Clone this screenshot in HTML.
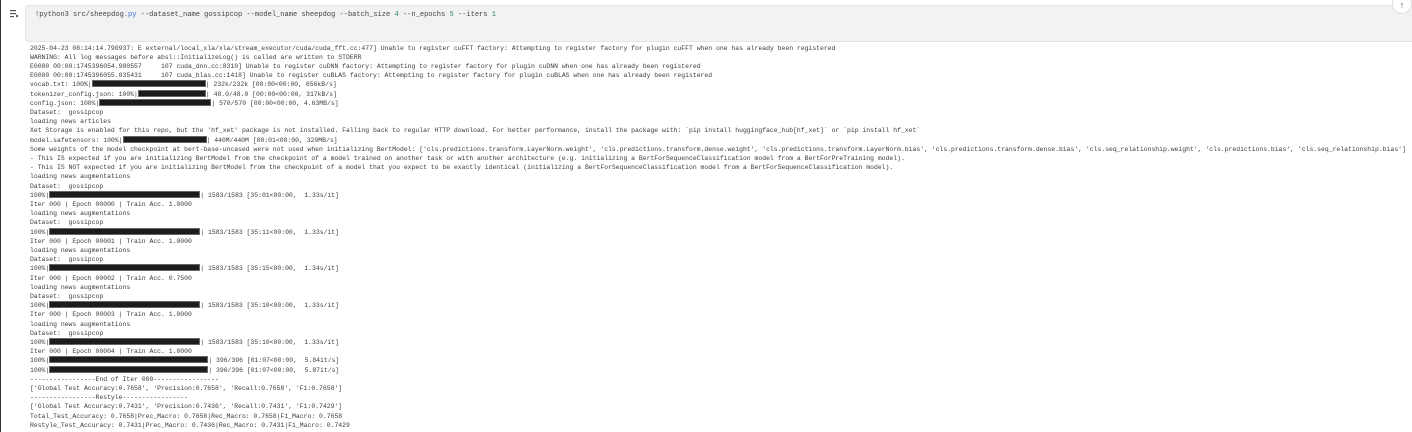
<!DOCTYPE html>
<html><head><meta charset="utf-8"><style>
body{margin:0;width:1412px;height:432px;background:#fff;position:relative;overflow:hidden;font-family:"Liberation Mono",monospace}
.lb{position:absolute;left:0;top:0;width:1px;height:432px;background:#333}
.run{position:absolute;left:10px;top:9px;width:9px;height:9px}
.cell{position:absolute;left:25px;top:5px;width:1390px;height:37px;background:#f2f2f4;border:1px solid #e4e4e6;border-radius:3px;box-sizing:border-box}
.cmd{position:absolute;left:35px;top:11px;font-size:7.05px;color:#444;white-space:pre}
.g{color:#2e8b57}.b{color:#3a6fd8}
.up{position:absolute;left:1392px;top:-6px;width:18px;height:18px;border-radius:50%;background:#fff;border:1px solid #ddd;text-align:center;font-size:9px;line-height:22px;color:#555}
pre{position:absolute;left:30px;top:43.5px;margin:0;font-family:"Liberation Mono",monospace;font-size:6.43px;line-height:9.2px;color:#3c3c3c}
.bar{display:inline-block;height:7px;vertical-align:-1px;background:#1c1c1c;border:1px solid #666;box-sizing:border-box}
</style></head><body>
<div class="lb"></div>
<svg class="run" viewBox="0 0 9 9"><rect x="0" y="1" width="6" height="1.2" fill="#555"/><rect x="0" y="4" width="6" height="1.2" fill="#555"/><rect x="0" y="7" width="4" height="1.2" fill="#555"/><path d="M6 5.5 L9 7 L6 8.5Z" fill="#555"/></svg>
<div class="cell"></div>
<div class="cmd">!python3 src/sheepdog<span class="b">.py</span> --dataset_name gossipcop --model_name sheepdog --batch_size <span class="g">4</span> --n_epochs <span class="g">5</span> --iters <span class="g">1</span></div>
<div class="up">↑</div>
<pre>2025-04-23 08:14:14.790937: E external/local_xla/xla/stream_executor/cuda/cuda_fft.cc:477] Unable to register cuFFT factory: Attempting to register factory for plugin cuFFT when one has already been registered
WARNING: All log messages before absl::InitializeLog() is called are written to STDERR
E0000 00:00:1745396054.980557     107 cuda_dnn.cc:8310] Unable to register cuDNN factory: Attempting to register factory for plugin cuDNN when one has already been registered
E0000 00:00:1745396055.035431     107 cuda_blas.cc:1418] Unable to register cuBLAS factory: Attempting to register factory for plugin cuBLAS when one has already been registered
vocab.txt: 100%|<span class="bar" style="width:114px"></span>| 232k/232k [00:00&lt;00:00, 656kB/s]
tokenizer_config.json: 100%|<span class="bar" style="width:68px"></span>| 48.0/48.0 [00:00&lt;00:00, 317kB/s]
config.json: 100%|<span class="bar" style="width:112px"></span>| 570/570 [00:00&lt;00:00, 4.63MB/s]
Dataset:  gossipcop
loading news articles
Xet Storage is enabled for this repo, but the 'hf_xet' package is not installed. Falling back to regular HTTP download. For better performance, install the package with: `pip install huggingface_hub[hf_xet]` or `pip install hf_xet`
model.safetensors: 100%|<span class="bar" style="width:84px"></span>| 440M/440M [00:01&lt;00:00, 320MB/s]
Some weights of the model checkpoint at bert-base-uncased were not used when initializing BertModel: ['cls.predictions.transform.LayerNorm.weight', 'cls.predictions.transform.dense.weight', 'cls.predictions.transform.LayerNorm.bias', 'cls.predictions.transform.dense.bias', 'cls.seq_relationship.weight', 'cls.predictions.bias', 'cls.seq_relationship.bias']
- This IS expected if you are initializing BertModel from the checkpoint of a model trained on another task or with another architecture (e.g. initializing a BertForSequenceClassification model from a BertForPreTraining model).
- This IS NOT expected if you are initializing BertModel from the checkpoint of a model that you expect to be exactly identical (initializing a BertForSequenceClassification model from a BertForSequenceClassification model).
loading news augmentations
Dataset:  gossipcop
100%|<span class="bar" style="width:151px"></span>| 1583/1583 [35:01&lt;00:00,  1.33s/it]
Iter 000 | Epoch 00000 | Train Acc. 1.0000
loading news augmentations
Dataset:  gossipcop
100%|<span class="bar" style="width:151px"></span>| 1583/1583 [35:11&lt;00:00,  1.33s/it]
Iter 000 | Epoch 00001 | Train Acc. 1.0000
loading news augmentations
Dataset:  gossipcop
100%|<span class="bar" style="width:151px"></span>| 1583/1583 [35:15&lt;00:00,  1.34s/it]
Iter 000 | Epoch 00002 | Train Acc. 0.7500
loading news augmentations
Dataset:  gossipcop
100%|<span class="bar" style="width:151px"></span>| 1583/1583 [35:10&lt;00:00,  1.33s/it]
Iter 000 | Epoch 00003 | Train Acc. 1.0000
loading news augmentations
Dataset:  gossipcop
100%|<span class="bar" style="width:151px"></span>| 1583/1583 [35:10&lt;00:00,  1.33s/it]
Iter 000 | Epoch 00004 | Train Acc. 1.0000
100%|<span class="bar" style="width:159px"></span>| 396/396 [01:07&lt;00:00,  5.84it/s]
100%|<span class="bar" style="width:159px"></span>| 396/396 [01:07&lt;00:00,  5.87it/s]
-----------------End of Iter 000-----------------
['Global Test Accuracy:0.7658', 'Precision:0.7658', 'Recall:0.7658', 'F1:0.7658']
-----------------Restyle-----------------
['Global Test Accuracy:0.7431', 'Precision:0.7436', 'Recall:0.7431', 'F1:0.7429']
Total_Test_Accuracy: 0.7658|Prec_Macro: 0.7658|Rec_Macro: 0.7658|F1_Macro: 0.7658
Restyle_Test_Accuracy: 0.7431|Prec_Macro: 0.7436|Rec_Macro: 0.7431|F1_Macro: 0.7429</pre>
</body></html>
